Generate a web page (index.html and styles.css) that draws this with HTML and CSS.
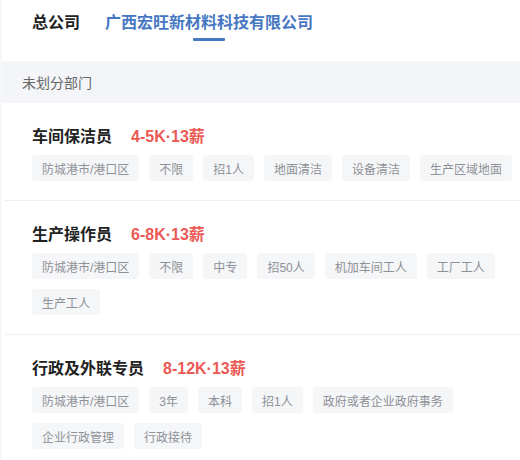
FILE: index.html
```html
<!DOCTYPE html>
<html lang="zh-CN">
<head>
<meta charset="utf-8">
<title>职位列表</title>
<link rel="stylesheet" href="styles.css">
</head>
<body>
<div class="page">
  <div class="tabs">
    <div class="tab">
      <span class="tab-label">总公司</span>
    </div>
    <div class="tab tab-active">
      <span class="tab-label">广西宏旺新材料科技有限公司</span>
      <span class="tab-bar"></span>
    </div>
  </div>
  <div class="dept">未划分部门</div>
  <div class="job">
    <div class="job-head">
      <span class="job-title">车间保洁员</span>
      <span class="job-salary">4-5K·13薪</span>
    </div>
    <div class="tags">
      <span class="tag">防城港市/港口区</span>
      <span class="tag">不限</span>
      <span class="tag">招1人</span>
      <span class="tag">地面清洁</span>
      <span class="tag">设备清洁</span>
      <span class="tag">生产区域地面</span>
    </div>
  </div>
  <div class="job">
    <div class="job-head">
      <span class="job-title">生产操作员</span>
      <span class="job-salary">6-8K·13薪</span>
    </div>
    <div class="tags">
      <span class="tag">防城港市/港口区</span>
      <span class="tag">不限</span>
      <span class="tag">中专</span>
      <span class="tag">招50人</span>
      <span class="tag">机加车间工人</span>
      <span class="tag">工厂工人</span>
      <span class="tag">生产工人</span>
    </div>
  </div>
  <div class="job">
    <div class="job-head">
      <span class="job-title">行政及外联专员</span>
      <span class="job-salary">8-12K·13薪</span>
    </div>
    <div class="tags">
      <span class="tag">防城港市/港口区</span>
      <span class="tag">3年</span>
      <span class="tag">本科</span>
      <span class="tag">招1人</span>
      <span class="tag">政府或者企业政府事务</span>
      <span class="tag">企业行政管理</span>
      <span class="tag">行政接待</span>
    </div>
  </div>
</div>
</body>
</html>
```

FILE: styles.css
```css
* {
  box-sizing: border-box;
}

html, body {
  margin: 0;
  padding: 0;
}

body {
  background: #f6f7f9;
  font-family: "Liberation Sans", "Noto Sans CJK SC", sans-serif;
  width: 520px;
  height: 460px;
  overflow: hidden;
}

.page {
  margin-left: 2px;
  background: #ffffff;
  min-height: 460px;
}

.tabs {
  display: flex;
  align-items: flex-start;
  height: 61px;
  padding-left: 30px;
  gap: 25px;
}

.tab {
  display: flex;
  flex-direction: column;
  align-items: center;
  padding-top: 12px;
}

.tab-label {
  font-size: 16px;
  line-height: 22px;
  font-weight: 700;
  color: #222222;
}

.tab-active .tab-label {
  color: #4677c2;
}

.tab-bar {
  display: block;
  width: 32px;
  height: 3px;
  margin-top: 4px;
  background: #4677c2;
  border-radius: 1px;
}

.dept {
  height: 42px;
  display: flex;
  align-items: center;
  padding-left: 20px;
  background: #f3f5f8;
  font-size: 14px;
  color: #666666;
}

.job {
  margin-left: 2px;
  padding: 20px 4px 19px 28px;
  border-bottom: 1px solid #eef0f3;
}

.job-head {
  display: flex;
  align-items: center;
  height: 24px;
  margin-bottom: 8px;
}

.job-title {
  font-size: 16px;
  font-weight: 700;
  color: #222222;
}

.job-salary {
  margin-left: 19px;
  font-size: 16px;
  font-weight: 700;
  color: #ec5a55;
}

.tags {
  display: flex;
  flex-wrap: wrap;
  gap: 10px;
}

.tag {
  display: inline-flex;
  align-items: center;
  height: 26px;
  padding: 0 10px;
  background: #f5f6f8;
  border-radius: 3px;
  font-size: 12px;
  color: #8e9197;
  white-space: nowrap;
}
```
